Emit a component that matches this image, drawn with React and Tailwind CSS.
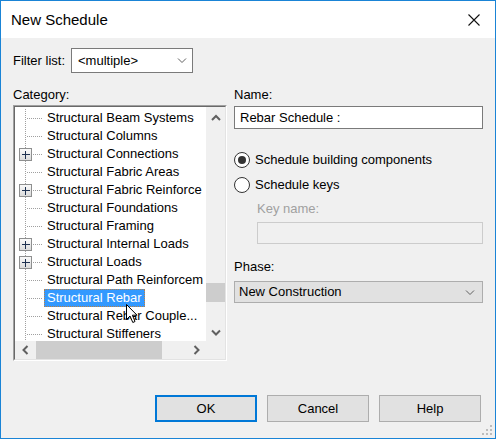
import React from 'react';

const items = [
  { t: 'Structural Beam Systems' },
  { t: 'Structural Columns' },
  { t: 'Structural Connections', plus: true },
  { t: 'Structural Fabric Areas' },
  { t: 'Structural Fabric Reinforce', plus: true },
  { t: 'Structural Foundations' },
  { t: 'Structural Framing' },
  { t: 'Structural Internal Loads', plus: true },
  { t: 'Structural Loads', plus: true },
  { t: 'Structural Path Reinforcem' },
  { t: 'Structural Rebar', selected: true },
  { t: 'Structural Rebar Couple...' },
  { t: 'Structural Stiffeners' },
];

function TreeLines({ plus }) {
  return (
    <svg width="29" height="18" className="shrink-0" shapeRendering="crispEdges">
      <line x1="10.5" y1="0" x2="10.5" y2="18" stroke="#a0a0a0" strokeDasharray="1 1" />
      <line x1="12" y1="9.5" x2="28" y2="9.5" stroke="#a0a0a0" strokeDasharray="1 1" />
      {plus && (
        <g>
          <defs>
            <linearGradient id="pb" x1="0" y1="0" x2="0" y2="1">
              <stop offset="0" stopColor="#fbfbfb" />
              <stop offset="1" stopColor="#d9d9d9" />
            </linearGradient>
          </defs>
          <rect x="4.5" y="3.5" width="12" height="12" fill="url(#pb)" stroke="#8e8f8f" />
          <line x1="7" y1="9.5" x2="15" y2="9.5" stroke="#1e3150" />
          <line x1="10.5" y1="6" x2="10.5" y2="14" stroke="#1e3150" />
        </g>
      )}
    </svg>
  );
}

function Chevron({ dir = 'down', thin, color = '#606060' }) {
  const paths = {
    up: 'M1 6 L5 2 L9 6',
    down: 'M1 1.5 L5 5.5 L9 1.5',
    left: 'M5.5 1 L1.5 5 L5.5 9',
    right: 'M1.5 1 L5.5 5 L1.5 9',
  };
  const horiz = dir === 'up' || dir === 'down';
  return (
    <svg width={horiz ? 10 : 7} height={horiz ? 7 : 10} fill="none">
      <path d={paths[dir]} stroke={color} strokeWidth={thin ? 1 : 2} />
    </svg>
  );
}

function Radio({ checked, label }) {
  return (
    <div className="flex items-center h-[20px]">
      <div className="w-[16px] h-[16px] rounded-full border border-[#333333] bg-white flex items-center justify-center">
        {checked && <div className="w-[8px] h-[8px] rounded-full bg-[#333333]" />}
      </div>
      <span className="ml-[5px]">{label}</span>
    </div>
  );
}

function Button({ children, primary }) {
  return (
    <div
      className={
        'w-[102px] h-[27px] flex items-center justify-center bg-[#e1e1e1] ' +
        (primary ? 'border-2 border-[#0078d7]' : 'border border-[#adadad]')
      }
    >
      {children}
    </div>
  );
}

export default function App() {
  return (
    <div className="w-[496px] h-[439px] border border-[#1a84d6] flex flex-col bg-[#f0f0f0] text-black text-[13px] leading-[16px] font-['Liberation_Sans',Arial,sans-serif]">
      {/* Title bar */}
      <div className="h-[37px] bg-white flex items-center justify-between pl-[10px] pr-[15px] shrink-0">
        <span className="text-[15px] leading-[18px]">New Schedule</span>
        <svg width="12" height="12">
          <path d="M0.5 0.5 L11.5 11.5 M11.5 0.5 L0.5 11.5" stroke="#111" strokeWidth="1.1" />
        </svg>
      </div>

      {/* Body */}
      <div className="flex-1 flex flex-col pl-[12px] pt-[10px] pb-[16px] relative">
        <div className="flex items-center">
          <span>Filter list:</span>
          <div className="ml-[6px] w-[122px] h-[25px] bg-white border border-[#7a7a7a] flex items-center justify-between pl-[6px] pr-[5px]">
            <span>&lt;multiple&gt;</span>
            <Chevron dir="down" thin />
          </div>
        </div>

        <div className="flex mt-[14px]">
          {/* Left column */}
          <div className="w-[214px] flex flex-col">
            <span>Category:</span>
            <div className="mt-[2px] h-[256px] border border-t-[#a0a0a0] border-l-[#a0a0a0] border-r-[#ffffff] border-b-[#ffffff]">
              <div className="h-full border border-t-[#696969] border-l-[#696969] border-r-[#e3e3e3] border-b-[#e3e3e3] bg-white flex flex-col">
                <div className="flex h-[234px]">
                  <div className="flex-1 overflow-hidden relative pt-[2px]">
                    {items.map((it) => (
                      <div key={it.t} className="h-[18px] flex items-center whitespace-nowrap">
                        <TreeLines plus={it.plus} />
                        <span
                          className={
                            'px-[3px] h-[18px] leading-[18px] ' +
                            (it.selected ? 'bg-[#3399ff] text-white outline-1 outline-dotted outline-[#c08040] -outline-offset-1' : '')
                          }
                        >
                          {it.t}
                        </span>
                      </div>
                    ))}
                    <svg width="13" height="20" className="absolute left-[111px] top-[197px]">
                      <path
                        d="M0.5 0.5 L0.5 15.5 L4 12 L6.8 18.5 L9 17.5 L6.4 11.2 L11 11.2 Z"
                        fill="white"
                        stroke="black"
                        strokeLinejoin="round"
                      />
                    </svg>
                  </div>
                  {/* Vertical scrollbar */}
                  <div className="w-[19px] bg-[#f0f0f0] flex flex-col">
                    <div className="h-[17px] flex items-center justify-center pt-[3px]">
                      <Chevron dir="up" />
                    </div>
                    <div className="flex-1">
                      <div className="mt-[159px] h-[19px] bg-[#cdcdcd]" />
                    </div>
                    <div className="h-[17px] flex items-center justify-center">
                      <Chevron dir="down" />
                    </div>
                  </div>
                </div>
                {/* Horizontal scrollbar */}
                <div className="flex-1 flex">
                  <div className="flex-1 bg-[#f0f0f0] flex">
                    <div className="w-[21px] flex items-center justify-center">
                      <Chevron dir="left" />
                    </div>
                    <div className="w-[126px] bg-[#cdcdcd]" />
                    <div className="flex-1" />
                    <div className="w-[19px] flex items-center justify-center">
                      <Chevron dir="right" />
                    </div>
                  </div>
                  <div className="w-[19px] bg-[#f0f0f0]" />
                </div>
              </div>
            </div>
          </div>

          {/* Right column */}
          <div className="w-[249px] ml-[7px] flex flex-col">
            <span>Name:</span>
            <div className="mt-[3px] h-[23px] bg-white border border-[#7a7a7a] flex items-center pl-[5px]">
              Rebar Schedule :
            </div>
            <div className="mt-[21px]">
              <Radio checked label="Schedule building components" />
            </div>
            <div className="mt-[5px]">
              <Radio label="Schedule keys" />
            </div>
            <span className="mt-[6px] ml-[23px] text-[#a0a0a0]">Key name:</span>
            <div className="mt-[5px] ml-[23px] h-[22px] bg-[#f0f0f0] border border-[#cccccc]" />
            <span className="mt-[15px]">Phase:</span>
            <div className="mt-[6px] h-[22px] bg-[#e1e1e1] border border-[#adadad] flex items-center justify-between pl-[4px] pr-[7px]">
              <span>New Construction</span>
              <Chevron dir="down" thin />
            </div>
          </div>
        </div>

        <div className="flex-1" />

        {/* Buttons */}
        <div className="flex justify-end gap-[10px] pr-[14px]">
          <Button primary>OK</Button>
          <Button>Cancel</Button>
          <Button>Help</Button>
        </div>

        <svg width="11" height="11" className="absolute right-[2px] bottom-[2px]">
          <g fill="#bcbcbc">
            <rect x="8" y="0" width="2" height="2" />
            <rect x="4" y="4" width="2" height="2" />
            <rect x="8" y="4" width="2" height="2" />
            <rect x="0" y="8" width="2" height="2" />
            <rect x="4" y="8" width="2" height="2" />
            <rect x="8" y="8" width="2" height="2" />
          </g>
        </svg>
      </div>
    </div>
  );
}
